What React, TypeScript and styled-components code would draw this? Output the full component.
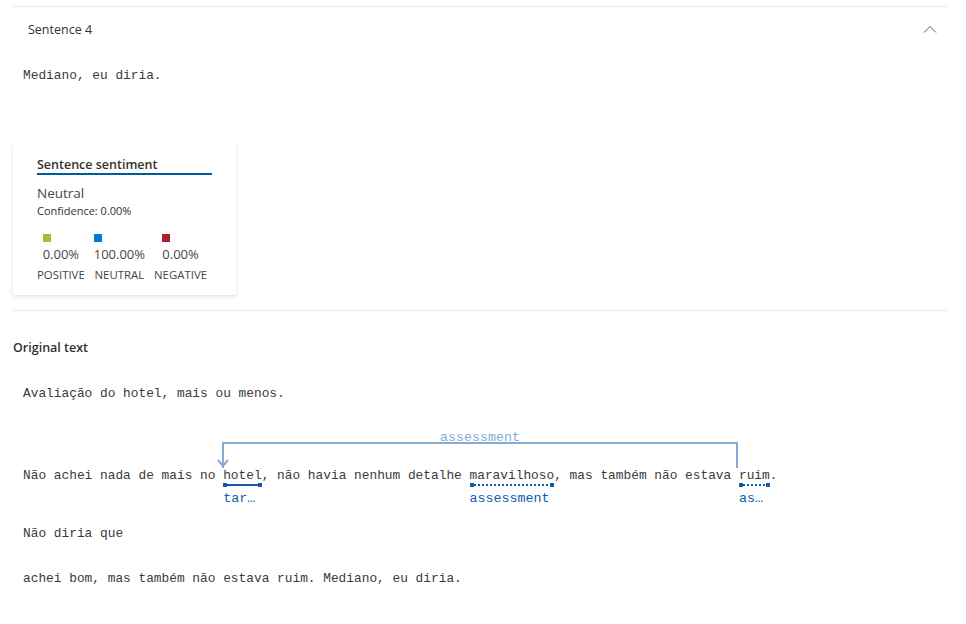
import React from "react";
import styled, { createGlobalStyle } from "styled-components";

const GlobalStyle = createGlobalStyle`
  html, body {
    margin: 0;
    padding: 0;
    background: #ffffff;
  }
  body {
    font-family: "Open Sans", "Noto Sans", Arial, sans-serif;
    color: #323130;
  }
`;

const Page = styled.div`
  padding: 6px 19px 0 13px;
`;

const Section = styled.section`
  border-top: 1px solid #edebe9;
`;

const SectionHeader = styled.div`
  display: flex;
  align-items: center;
  justify-content: space-between;
  height: 44px;
  padding: 0 10px 0 15px;
  font-size: 12.5px;
  color: #323130;
`;

const Chevron = styled.svg`
  width: 14px;
  height: 8px;
`;

const Mono = styled.div`
  font-family: "Liberation Mono", "DejaVu Sans Mono", monospace;
  font-size: 12.83px;
  line-height: 20px;
  color: #3b3a39;
  white-space: pre;
`;

const SentenceText = styled(Mono)`
  padding: 15px 10px 0;
`;

const Card = styled.div`
  width: 223px;
  box-sizing: border-box;
  margin: 57px 0 15px;
  padding: 13px 24px 12px;
  background: #fff;
  box-shadow: 0 1.6px 3.6px rgba(0, 0, 0, 0.13), 0 0.3px 0.9px rgba(0, 0, 0, 0.11);
`;

const CardTitle = styled.div`
  width: 175px;
  font-size: 12.5px;
  font-weight: 600;
  line-height: 17px;
  border-bottom: 2px solid #005a9e;
  color: #323130;
`;

const Verdict = styled.div`
  margin-top: 9px;
  font-size: 13.5px;
  line-height: 18px;
  color: #484644;
`;

const Confidence = styled.div`
  font-size: 11px;
  line-height: 18px;
  color: #323130;
`;

const Scores = styled.div`
  display: flex;
  gap: 9px;
  margin-top: 14px;
`;

const ScoreColumn = styled.div`
  display: flex;
  flex-direction: column;
  align-items: center;
`;

const ScoreValue = styled.div`
  display: flex;
  flex-direction: column;
  align-items: flex-start;
`;

const Swatch = styled.span<{ $color: string }>`
  width: 8px;
  height: 8px;
  background: ${(p) => p.$color};
`;

const Percent = styled.div`
  font-size: 13px;
  line-height: 18px;
  color: #484644;
  margin-top: 3px;
`;

const ScoreLabel = styled.div`
  margin-top: 4px;
  font-size: 11.4px;
  line-height: 16px;
  color: #484644;
`;

const Divider = styled.div`
  border-top: 1px solid #edebe9;
`;

const Heading = styled.h3`
  margin: 28px 0 15px;
  font-size: 12.5px;
  font-weight: 600;
  line-height: 18px;
  color: #323130;
`;

const Paragraph = styled(Mono)`
  padding: 12px 10px 13px;
`;

const Annotated = styled(Mono)`
  padding: 49px 10px 26px;
`;

const Token = styled.span`
  position: relative;
  display: inline-block;
`;

const Mark = styled.span<{ $dotted?: boolean }>`
  position: absolute;
  left: 0;
  right: 0;
  top: 18px;
  height: 2px;
  ${(p) =>
    p.$dotted
      ? `background-image: linear-gradient(to right, #0f5ca8 50%, transparent 50%);
         background-size: 4px 2px;`
      : `background: #0f5ca8;`}
  &::before,
  &::after {
    content: "";
    position: absolute;
    top: -1px;
    width: 4px;
    height: 4px;
    background: #0f5ca8;
  }
  &::before {
    left: 0;
  }
  &::after {
    right: 0;
  }
`;

const TokenLabel = styled.span`
  position: absolute;
  left: 0;
  top: 25px;
  width: 100%;
  font-size: 13.33px;
  line-height: 16px;
  color: #0f5ca8;
  overflow: hidden;
  text-overflow: ellipsis;
  white-space: nowrap;
`;

const Arc = styled.span<{ $span: number }>`
  position: absolute;
  left: -1px;
  top: -24px;
  width: ${(p) => p.$span}ch;
  height: 26px;
  box-sizing: border-box;
  border: 2px solid #83abd4;
  border-bottom: none;
`;

const ArcLabel = styled.span`
  position: absolute;
  left: 0;
  right: 0;
  top: -13px;
  text-align: center;
  font-size: 13.33px;
  line-height: 14px;
  color: #83abd4;
`;

const ArrowHead = styled.svg`
  position: absolute;
  left: -8px;
  bottom: 0;
  width: 14px;
  height: 9px;
  overflow: visible;
`;

type Score = { label: string; value: string; color: string };

const scores: Score[] = [
  { label: "POSITIVE", value: "0.00%", color: "#9ac23c" },
  { label: "NEUTRAL", value: "100.00%", color: "#0078d4" },
  { label: "NEGATIVE", value: "0.00%", color: "#a4262c" },
];

export default function App() {
  return (
    <>
      <GlobalStyle />
      <Page>
        <Section>
          <SectionHeader>
            <span>Sentence 4</span>
            <Chevron viewBox="0 0 14 8">
              <polyline points="1,7.5 7,1.5 13,7.5" fill="none" stroke="#605e5c" strokeWidth="1" />
            </Chevron>
          </SectionHeader>
          <SentenceText>Mediano, eu diria.</SentenceText>

          <Card>
            <CardTitle>Sentence sentiment</CardTitle>
            <Verdict>Neutral</Verdict>
            <Confidence>Confidence: 0.00%</Confidence>
            <Scores>
              {scores.map((s) => (
                <ScoreColumn key={s.label}>
                  <ScoreValue>
                    <Swatch $color={s.color} />
                    <Percent>{s.value}</Percent>
                  </ScoreValue>
                  <ScoreLabel>{s.label}</ScoreLabel>
                </ScoreColumn>
              ))}
            </Scores>
          </Card>
        </Section>

        <Divider />
        <Heading>Original text</Heading>
        <Paragraph>Avaliação do hotel, mais ou menos.</Paragraph>
        <Annotated>
          {"Não achei nada de mais no "}
          <Token>
            hotel
            <Arc $span={67}>
              <ArcLabel>assessment</ArcLabel>
              <ArrowHead viewBox="0 0 14 9">
                <polyline points="2,1 7,7 12,1" fill="none" stroke="#83abd4" strokeWidth="2" />
              </ArrowHead>
            </Arc>
            <Mark />
            <TokenLabel>target</TokenLabel>
          </Token>
          {", não havia nenhum detalhe "}
          <Token>
            maravilhoso
            <Mark $dotted />
            <TokenLabel>assessment</TokenLabel>
          </Token>
          {", mas também não estava "}
          <Token>
            ruim
            <Mark $dotted />
            <TokenLabel>assessment</TokenLabel>
          </Token>
          {"."}
        </Annotated>
        <Paragraph>Não diria que</Paragraph>
        <Paragraph>achei bom, mas também não estava ruim. Mediano, eu diria.</Paragraph>
      </Page>
    </>
  );
}
